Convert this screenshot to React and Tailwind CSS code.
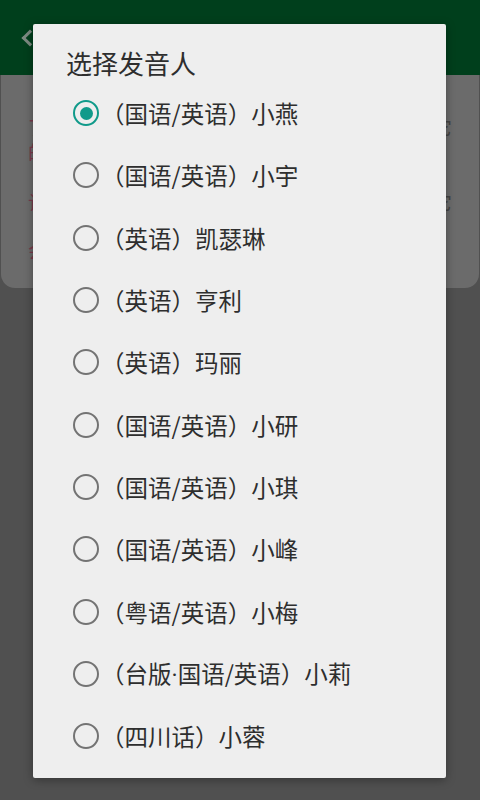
import { useState } from "react";

const speakers = [
  "（国语/英语）小燕",
  "（国语/英语）小宇",
  "（英语）凯瑟琳",
  "（英语）亨利",
  "（英语）玛丽",
  "（国语/英语）小研",
  "（国语/英语）小琪",
  "（国语/英语）小峰",
  "（粤语/英语）小梅",
  "（台版·国语/英语）小莉",
  "（四川话）小蓉",
];

const Radio = ({ checked }) => (
  <span
    className={
      "flex h-[26px] w-[26px] shrink-0 items-center justify-center rounded-full border-[2.5px] " +
      (checked ? "border-[#109a8a]" : "border-[#737373]")
    }
  >
    {checked && <span className="h-[13px] w-[13px] rounded-full bg-[#109a8a]" />}
  </span>
);

// the middle dot is narrow in the original, so it gets a latin font
const Label = ({ text }) => {
  const parts = text.split("·");
  return (
    <span className="ml-[2px] text-[23.5px] leading-[28px]">
      {parts.map((p, i) => (
        <span key={i}>
          {i > 0 && <span className="font-['Roboto']">·</span>}
          {p}
        </span>
      ))}
    </span>
  );
};

const App = () => {
  const [selected, setSelected] = useState(0);

  return (
    <div
      className="relative h-[800px] w-[480px] overflow-hidden bg-[#505050]"
      style={{ fontFamily: '"Noto Sans CJK SC", "Noto Sans", sans-serif' }}
    >
      {/* page behind the dim layer */}
      <div className="flex h-[75px] items-center bg-[#003f1c] pl-[24px]">
        <span className="block h-[12px] w-[12px] rotate-45 border-b-[3px] border-l-[3px] border-[#7d8a82]" />
      </div>
      <div className="mx-[1px] flex h-[213px] flex-col rounded-b-[14px] bg-[#6b6b6b] px-[27px] pt-[39px] text-[19px] leading-[25px] text-[#7b3a4c]">
        <div className="flex justify-between">
          <span>了解更多关于语音合成的设置</span>
          <span className="text-[#444]">它</span>
        </div>
        <span>的发音人</span>
        <div className="mt-[25px] flex justify-between">
          <span>让语音播报更加自然</span>
          <span className="text-[#444]">它</span>
        </div>
        <span className="mt-[23px]">会根据选择切换</span>
      </div>

      {/* dialog */}
      <div className="absolute left-[33px] top-[24px] flex h-[754px] w-[413px] flex-col rounded-[2px] bg-[#eeeeee] text-[#2e2e2e] shadow-[0_2px_10px_rgba(0,0,0,0.35)]">
        <div className="h-[58px] pl-[33px] pt-[24px] text-[26px] leading-[30px]">选择发音人</div>
        <div className="flex flex-col">
          {speakers.map((name, i) => (
            <button
              key={i}
              onClick={() => setSelected(i)}
              className="flex h-[62.3px] items-center pl-[40px] text-left"
            >
              <Radio checked={selected === i} />
              <Label text={name} />
            </button>
          ))}
        </div>
      </div>
    </div>
  );
};

export default App;
